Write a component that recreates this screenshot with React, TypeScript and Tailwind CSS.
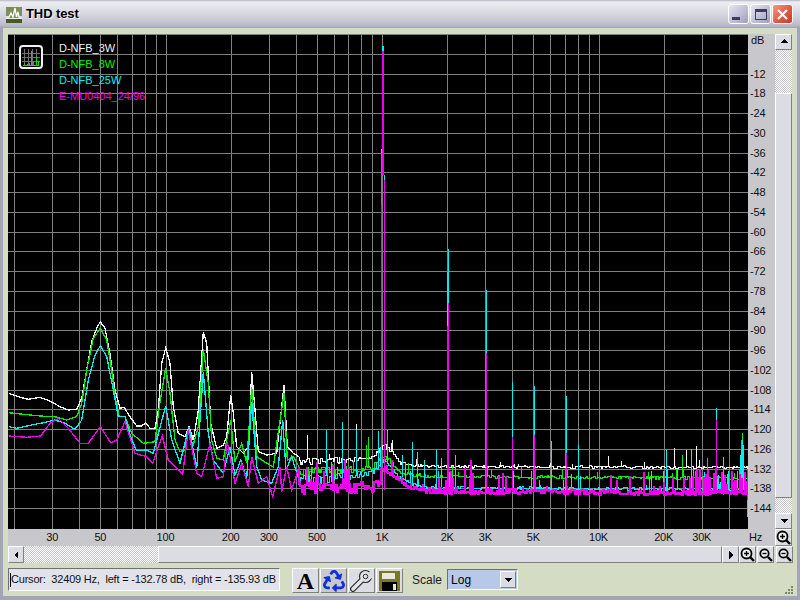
import { ReactNode } from 'react';
import { FaRecycle } from 'react-icons/fa';

// all chart coordinates are page pixels, the svg viewBox starts at the plot's corner
const xOf = (f: number) => 165.5 + 216.5 * Math.log10(f / 100);

const gridFreqs = [
  20, 30, 40, 50, 60, 70, 80, 90, 100, 200, 300, 400, 500, 600, 700, 800, 900, 1000, 2000, 3000, 4000, 5000, 6000,
  7000, 8000, 9000, 10000, 20000, 30000, 40000,
];

const dbLabels = Array.from({ length: 23 }, (_, i) => -12 - i * 6);

const freqLabels: [number, string][] = [
  [30, '30'],
  [50, '50'],
  [100, '100'],
  [200, '200'],
  [300, '300'],
  [500, '500'],
  [1000, '1K'],
  [2000, '2K'],
  [3000, '3K'],
  [5000, '5K'],
  [10000, '10K'],
  [20000, '20K'],
  [30000, '30K'],
];

// hand traced from the low end of the plot, in 3x units from (0,300)
const whiteLow = [
  [27, 280], [60, 292], [85, 298], [120, 292], [150, 303], [180, 320], [205, 330], [230, 328], [245, 295], [260, 210],
  [275, 125], [290, 85], [301, 65], [315, 85], [330, 160], [345, 270], [360, 325], [372, 322], [390, 350], [410, 378],
  [425, 378], [437, 368], [450, 385], [465, 385], [475, 330], [485, 190], [497, 143], [510, 190], [520, 320], [535, 400],
  [555, 410], [567, 380], [580, 420], [595, 330], [610, 97], [620, 130], [632, 370], [650, 445], [670, 435], [680, 410],
  [692, 285], [700, 340], [710, 440], [730, 460], [745, 440], [755, 215], [765, 330], [775, 455], [800, 465], [830, 460],
  [852, 255], [862, 440], [880, 460], [897, 470],
];
const greenLow = [
  [27, 338], [70, 343], [120, 348], [165, 350], [200, 360], [230, 350], [245, 310], [260, 210], [280, 115], [301, 85],
  [320, 120], [335, 210], [345, 290], [358, 350], [375, 350], [395, 400], [430, 430], [465, 425], [478, 320], [497, 205],
  [510, 280], [525, 420], [540, 455], [555, 450], [567, 385], [578, 440], [595, 380], [610, 148], [625, 250], [635, 420],
  [650, 475], [670, 480], [680, 420], [692, 360], [705, 485], [725, 430], [740, 490], [755, 260], [770, 470], [800, 490],
  [820, 500], [852, 280], [862, 480], [880, 470], [897, 500],
];
const cyanLow = [
  [27, 380], [50, 385], [90, 376], [130, 368], [165, 360], [195, 370], [225, 388], [245, 360], [265, 240], [285, 165],
  [301, 137], [320, 170], [340, 270], [355, 350], [375, 350], [395, 420], [410, 452], [440, 450], [460, 460], [478, 390],
  [497, 318], [515, 420], [540, 490], [567, 380], [590, 505], [610, 215], [625, 400], [640, 480], [670, 520], [690, 440],
  [705, 525], [722, 480], [740, 535], [755, 305], [770, 500], [785, 540], [815, 550], [835, 500], [848, 360], [858, 510],
  [875, 470], [897, 540],
];
const magentaLow = [
  [27, 408], [80, 412], [122, 408], [150, 370], [175, 355], [205, 385], [240, 430], [265, 430], [301, 380], [332, 428],
  [350, 420], [375, 365], [405, 460], [440, 470], [458, 490], [475, 440], [487, 408], [505, 480], [530, 505], [548, 522],
  [565, 390], [590, 520], [605, 530], [630, 430], [650, 535], [670, 530], [682, 425], [705, 550], [725, 490], [745, 560],
  [755, 470], [775, 550], [800, 530], [818, 590], [840, 500], [845, 575], [860, 500], [875, 570], [897, 500],
];

function lerp(anchors: number[][], x: number) {
  for (let i = 1; i < anchors.length; i++) {
    if (x <= anchors[i][0]) {
      const [x0, y0] = anchors[i - 1];
      const [x1, y1] = anchors[i];
      return y0 + ((y1 - y0) * (x - x0)) / (x1 - x0);
    }
  }
  return anchors[anchors.length - 1][1];
}

function makeRand(seed: number) {
  let s = seed;
  return () => {
    s = (s * 1664525 + 1013904223) % 4294967296;
    return s / 4294967296;
  };
}

type NoiseOpts = {
  start: number[];
  floor: number[][];
  jitter: number[][];
  rate: number[][];
  height: number;
  peaks: number[][];
  seed: number;
};

const lowPoints = (low: number[][]) =>
  low.map(([x, y]) => `${(x / 3).toFixed(1)},${(300 + y / 3).toFixed(1)}`).join(' ');

// noise floor: the value holds for 1-2 pixels, with a comb of upward spikes on top
function noisePoints({ start, floor, jitter, rate, height, peaks, seed }: NoiseOpts) {
  const rand = makeRand(seed);
  const pts: string[] = [`${(start[0] / 3).toFixed(1)},${(300 + start[1] / 3).toFixed(1)}`];
  let x = 299;
  while (x <= 747) {
    const hold = 1 + Math.floor(rand() * 2);
    const end = Math.min(x + hold, 748);
    const y = Math.round(lerp(floor, x) + (rand() - 0.5) * lerp(jitter, x) * 2);
    for (const p of peaks) {
      if (p[0] >= x && p[0] < end) pts.push(`${p[0]},${y}`, `${p[0]},${p[1]}`, `${p[0]},${y}`);
    }
    if (rand() < lerp(rate, x)) {
      const top = Math.round(y - rand() * height);
      pts.push(`${x},${top}`, `${x},${y}`);
    } else {
      pts.push(`${x},${y}`);
    }
    pts.push(`${end},${y}`);
    x = end;
  }
  return pts.join(' ');
}

const traces = [
  {
    color: '#f4f4f4',
    low: lowPoints(whiteLow),
    noise: noisePoints({
      start: whiteLow[whiteLow.length - 1],
      floor: [[299, 462], [370, 458], [384, 445], [400, 463], [430, 466], [748, 467]],
      jitter: [[299, 4], [400, 1.5], [748, 1.2]],
      rate: [[299, 0.15], [400, 0.05], [748, 0.04]],
      height: 8,
      peaks: [[307, 435], [356, 424], [392, 440], [608, 456], [674, 448], [686, 450], [696, 446], [644, 462]],
      seed: 11,
    }),
    noiseWidth: 1,
  },
  {
    color: '#00f000',
    low: lowPoints(greenLow),
    noise: noisePoints({
      start: greenLow[greenLow.length - 1],
      floor: [[299, 472], [370, 468], [384, 455], [400, 473], [430, 476], [748, 478]],
      jitter: [[299, 5], [400, 1.5], [748, 1.5]],
      rate: [[299, 0.15], [400, 0.06], [748, 0.07]],
      height: 10,
      peaks: [[368, 437], [366, 445], [682, 455], [707, 458], [742, 433], [741, 440]],
      seed: 23,
    }),
    noiseWidth: 1,
  },
  {
    color: '#00f0f0',
    low: lowPoints(cyanLow),
    noise: noisePoints({
      start: cyanLow[cyanLow.length - 1],
      floor: [[299, 480], [370, 474], [384, 460], [400, 478], [420, 487], [550, 488], [748, 489]],
      jitter: [[299, 6], [400, 1.5], [748, 1.5]],
      rate: [[299, 0.2], [400, 0.15], [640, 0.06], [680, 0.35], [748, 0.5]],
      height: 20,
      peaks: [
        [326, 430], [342, 422], [356, 430], [378, 431], [387, 430], [412, 442], [417, 452], [436, 450], [441, 458],
        [455, 455], [551, 441], [578, 445], [666, 450], [691, 449], [723, 457], [740, 455], [741, 450], [742, 440],
        [743, 445], [402, 455], [424, 460],
      ],
      seed: 37,
    }),
    noiseWidth: 1,
  },
  {
    color: '#f000f0',
    low: lowPoints(magentaLow),
    noise: noisePoints({
      start: magentaLow[magentaLow.length - 1],
      floor: [[299, 490], [375, 487], [384, 468], [395, 475], [410, 488], [425, 491], [550, 492], [680, 493], [748, 493]],
      jitter: [[299, 7], [380, 6], [400, 2], [420, 3], [748, 2]],
      rate: [[299, 0.35], [380, 0.25], [400, 0.08], [420, 0.25], [560, 0.12], [680, 0.12], [700, 0.55], [748, 0.7]],
      height: 24,
      peaks: [[317, 462], [333, 465], [347, 470], [471, 460], [465, 468], [690, 478], [708, 470], [723, 480], [736, 480]],
      seed: 53,
    }),
    noiseWidth: 1.5,
  },
];

// [x, width, colour, y1, y2] for the harmonics that stand above the floor
const spikes: [number, number, string, number, number][] = [
  [381, 1, '#00f0f0', 149, 153],
  [381, 1, '#808080', 153, 205],
  [381, 1, '#f000f0', 205, 480],
  [382, 2, '#00f0f0', 46, 51],
  [382, 2, '#f000f0', 51, 175],
  [384, 1, '#00f0f0', 175, 180],
  [384, 1, '#f000f0', 180, 490],
  [448, 1, '#00f0f0', 249, 303],
  [447, 1, '#00f0f0', 272, 326],
  [448, 1, '#f000f0', 303, 492],
  [447, 1, '#f000f0', 326, 492],
  [486, 1, '#00f0f0', 290, 353],
  [486, 1, '#f000f0', 353, 492],
  [512, 1, '#00f0f0', 382, 437],
  [512, 1, '#f000f0', 437, 492],
  [534, 1, '#00f0f0', 386, 435],
  [534, 1, '#f000f0', 435, 492],
  [566, 1, '#00f0f0', 396, 453],
  [566, 1, '#f000f0', 453, 494],
  [716, 1, '#00f0f0', 408, 420],
  [716, 1, '#f000f0', 420, 494],
  [747, 1, '#f000f0', 470, 500],
  [747, 1, '#00f0f0', 500, 517],
];

function Plot() {
  return (
    <svg viewBox="8 34 740 495" className="block w-[740px] h-[495px]" shapeRendering="crispEdges">
      <rect x="8" y="34" width="740" height="495" fill="#000" />
      {gridFreqs.map((f) => (
        <line key={f} x1={Math.round(xOf(f)) + 0.5} x2={Math.round(xOf(f)) + 0.5} y1="34" y2="529" stroke="#808080" />
      ))}
      {Array.from({ length: 25 }, (_, i) => Math.round(34 + i * 19.75)).map((y) => (
        <line key={y} x1="8" x2="748" y1={y + 0.5} y2={y + 0.5} stroke="#808080" />
      ))}
      {traces.map((t) => (
        <g key={t.color} fill="none" stroke={t.color}>
          <polyline points={t.low} strokeWidth="1.3" />
          <polyline points={t.noise} strokeWidth={t.noiseWidth} />
        </g>
      ))}
      {spikes.map(([x, w, c, y1, y2], i) => (
        <rect key={i} x={x} y={y1} width={w} height={y2 - y1} fill={c} />
      ))}
    </svg>
  );
}

function ChartBadge() {
  return (
    <svg width="24" height="24" viewBox="0 0 24 24" className="absolute left-[11px] top-[11px]" shapeRendering="crispEdges">
      <rect x="1" y="1" width="22" height="22" rx="3" fill="#000" stroke="#f0f0f0" strokeWidth="2" shapeRendering="auto" />
      <path d="M5 4v16M9 4v16M13 4v16M17 4v16M3 8h18M3 12h18M3 16h18" stroke="#707070" />
      <path d="M4 20h16M5 20v-2M8 20v-1M10 20v-2M12 20v-14M14 20v-3M17 20v-8M19 20v-4" stroke="#00e000" />
    </svg>
  );
}

function Btn({ className, children }: { className: string; children?: ReactNode }) {
  return (
    <div
      className={`flex items-center justify-center border border-t-white border-l-white border-r-[#808080] border-b-[#808080] bg-[#dcdce4] ${className}`}
    >
      {children}
    </div>
  );
}

function Arrow({ dir }: { dir: 'up' | 'down' | 'left' | 'right' }) {
  const d = {
    up: 'M4 1 L0 5 H8 Z',
    down: 'M0 2 H8 L4 6 Z',
    left: 'M6 0 V8 L2 4 Z',
    right: 'M2 0 V8 L6 4 Z',
  }[dir];
  return (
    <svg width="8" height="8" viewBox="0 0 8 8" shapeRendering="crispEdges">
      <path d={d} fill="#000" />
    </svg>
  );
}

function ZoomIcon({ plus }: { plus?: boolean }) {
  return (
    <svg width="15" height="15" viewBox="0 0 15 15" fill="none" stroke="#000">
      <circle cx="6.5" cy="6.5" r={plus ? 5 : 4.2} strokeWidth="1.8" fill="#f0f0f0" />
      <path d="M10 10 L14 14" strokeWidth="2.4" />
      <path d={plus ? 'M4 6.5H9M6.5 4V9' : 'M4.5 6.5H8.5'} strokeWidth="1.4" />
    </svg>
  );
}

function WindowButton({ className, children }: { className: string; children: ReactNode }) {
  return (
    <div className={`flex h-[20px] w-[21px] items-center justify-center rounded-[3px] border border-white ${className}`}>
      {children}
    </div>
  );
}

const dither = 'bg-[repeating-conic-gradient(#c4c4c8_0_25%,#ffffff_0_50%)] bg-[length:2px_2px]';

export default function App() {
  return (
    <div className="flex h-[600px] w-[800px] flex-col overflow-hidden bg-[#a4a4b8] font-['Liberation_Sans',Arial,sans-serif] text-black">
      {/* title bar */}
      <div className="flex h-[28px] shrink-0 items-center bg-[linear-gradient(#b4b4c6_0,#eeeef2_2px,#dedee6_10px,#cacad6_20px,#b6b6c6_26px,#a0a0b4_28px)] pl-[6px] pr-[7px]">
        <svg width="16" height="16" viewBox="0 0 16 16" className="mt-[1px]" shapeRendering="crispEdges">
          <rect width="16" height="16" fill="#7d8f58" />
          <rect y="11" width="16" height="1" fill="#f0f0e0" />
          <rect y="12" width="16" height="4" fill="#46582c" />
          <path d="M0 10 H3 L5 6 L7 10 L9 1 L10.500 10 L12 5 L13 10 H16" fill="none" stroke="#fff" strokeWidth="1.300" shapeRendering="auto" />
        </svg>
        <span className="ml-[4px] text-[13px] font-bold tracking-[-0.1px] [text-shadow:1px_1px_0_#f4f4f8]">THD test</span>
        <div className="ml-auto flex gap-[1px]">
          <WindowButton className="bg-[linear-gradient(135deg,#e6e6f0,#b4b4cc_70%,#9c9cb8)]">
            <div className="mt-[8px] mr-[5px] h-[3px] w-[8px] bg-[#3c3c5c]" />
          </WindowButton>
          <WindowButton className="bg-[linear-gradient(135deg,#e6e6f0,#b4b4cc_70%,#9c9cb8)]">
            <div className="h-[11px] w-[12px] border border-t-[3px] border-[#3c3c5c]" />
          </WindowButton>
          <WindowButton className="bg-[linear-gradient(135deg,#f09a84,#e0553c_60%,#c83c28)]">
            <svg width="13" height="13" viewBox="0 0 13 13">
              <path d="M2 2 L11 11 M11 2 L2 11" stroke="#fff" strokeWidth="2.200" />
            </svg>
          </WindowButton>
        </div>
      </div>

      {/* client area */}
      <div className="mx-[3px] mb-[4px] flex min-h-0 flex-1 flex-col bg-[#d5dcc4] pl-[5px] pr-[5px] pt-[6px]">
        {/* plot, dB scale, vertical scroll bar */}
        <div className="flex h-[495px] shrink-0">
          <div className="relative h-[495px] w-[740px] shrink-0">
            <Plot />
            <ChartBadge />
            <div className="absolute left-[51px] top-[6px] flex flex-col text-[11px] leading-[16px]">
              <span className="text-[#f0f0f0]">D-NFB_3W</span>
              <span className="text-[#00f000]">D-NFB_8W</span>
              <span className="text-[#00f0f0]">D-NFB_25W</span>
              <span className="text-[#f000f0]">E-MU0404_24/96</span>
            </div>
          </div>
          <div className="flex w-[27px] shrink-0 flex-col bg-[#c8c8cc] pl-[2px] text-[11px] tracking-[-0.2px] text-[#101010]">
            <div className="ml-[1px] h-[13px] leading-[13px]">dB</div>
            <div className="mt-[17px] flex flex-col">
              {dbLabels.map((d) => (
                <div key={d} className="flex h-[19.75px] items-center">
                  {d}
                </div>
              ))}
            </div>
          </div>
          <div className="flex w-[17px] shrink-0 flex-col">
            <Btn className="h-[16px] shrink-0">
              <Arrow dir="up" />
            </Btn>
            <div className={`h-[43px] shrink-0 ${dither}`} />
            <Btn className="h-[405px] shrink-0" />
            <div className={`min-h-0 flex-1 ${dither}`} />
            <Btn className="h-[16px] shrink-0">
              <Arrow dir="down" />
            </Btn>
          </div>
        </div>

        {/* frequency scale */}
        <div className="flex h-[17px] shrink-0">
          <div className="relative w-[767px] shrink-0 bg-[#c8c8cc] text-[11px] tracking-[-0.2px] text-[#101010]">
            {freqLabels.map(([f, label]) => (
              <span
                key={label}
                className="absolute top-[1px] -translate-x-1/2 leading-[14px]"
                style={{ left: xOf(f) - 8 }}
              >
                {label}
              </span>
            ))}
            <span className="absolute left-[741px] top-[1px] leading-[14px]">Hz</span>
          </div>
          <Btn className="w-[17px] shrink-0">
            <ZoomIcon plus />
          </Btn>
        </div>

        {/* horizontal scroll bar and zoom buttons */}
        <div className="flex h-[17px] shrink-0">
          <Btn className="w-[16px] shrink-0">
            <Arrow dir="left" />
          </Btn>
          <div className={`w-[134px] shrink-0 ${dither}`} />
          <Btn className="w-[564px] shrink-0" />
          <Btn className="w-[17px] shrink-0">
            <Arrow dir="right" />
          </Btn>
          <Btn className="w-[17px] shrink-0">
            <ZoomIcon plus />
          </Btn>
          <Btn className="ml-[1px] w-[17px] shrink-0">
            <ZoomIcon />
          </Btn>
          <Btn className="ml-[2px] w-[17px] shrink-0">
            <ZoomIcon />
          </Btn>
        </div>

        {/* status and tool buttons */}
        <div className="relative flex min-h-0 flex-1 items-start pt-[5px]">
          <div className="flex h-[23px] w-[272px] shrink-0 items-center overflow-hidden whitespace-pre border border-t-[#707070] border-l-[#707070] border-r-white border-b-white bg-[#e2e2ea] pl-[1px] text-[11px] tracking-[-0.2px] text-[#101010]">
            <div className="h-[14px] w-[1px] shrink-0 bg-black" />
            Cursor:  32409 Hz,  left = -132.78 dB,  right = -135.93 dB
          </div>
          <div className="ml-[12px] flex gap-[1px]">
            <Btn className="h-[25px] w-[27px] font-['Liberation_Serif',serif] text-[24px] font-bold leading-none">A</Btn>
            <Btn className="h-[25px] w-[27px] !bg-[#c8c8d0]">
              <FaRecycle size={22} color="#1030d8" />
            </Btn>
            <Btn className="h-[25px] w-[27px]">
              <svg width="23" height="23" viewBox="0 0 23 23" fill="none">
                <path d="M3 20 L12 11" stroke="#303030" strokeWidth="6" strokeLinecap="round" />
                <circle cx="15.500" cy="7.500" r="6" fill="#e4e4e4" stroke="#303030" strokeWidth="1.200" />
                <path d="M3 20 L12 11" stroke="#e4e4e4" strokeWidth="3.500" strokeLinecap="round" />
                <path d="M15 7 L20 2.500 H23 V8 L19 11 Z" fill="#dcdce4" />
                <circle cx="15.500" cy="7.500" r="2.300" fill="#dcdce4" stroke="#303030" />
              </svg>
            </Btn>
            <Btn className="h-[25px] w-[27px]">
              <svg width="21" height="20" viewBox="0 0 21 20" shapeRendering="crispEdges">
                <rect width="21" height="20" fill="#78781c" />
                <rect x="3" y="2" width="13" height="6" fill="#e8e8d8" />
                <rect x="3" y="11" width="15" height="9" fill="#000" />
                <rect x="14" y="13" width="3" height="6" fill="#e8e8d8" />
              </svg>
            </Btn>
          </div>
          <span className="ml-[9px] mt-[3px] text-[12px] text-[#202020]">Scale</span>
          <div className="ml-[5px] mt-[1px] flex h-[21px] w-[71px] items-center justify-between border border-t-[#707070] border-l-[#707070] border-r-white border-b-white bg-[#b8c8e8] pl-[3px] pr-[1px] text-[12px]">
            Log
            <Btn className="h-[17px] w-[16px]">
              <Arrow dir="down" />
            </Btn>
          </div>
          <svg width="10" height="10" viewBox="0 0 10 10" className="absolute bottom-[1px] right-[-2px]" shapeRendering="crispEdges">
            <path d="M7 1h2v2h-2zM4 4h2v2h-2zM7 4h2v2h-2zM1 7h2v2h-2zM4 7h2v2h-2zM7 7h2v2h-2z" fill="#7a8a60" />
          </svg>
        </div>
      </div>
    </div>
  );
}
